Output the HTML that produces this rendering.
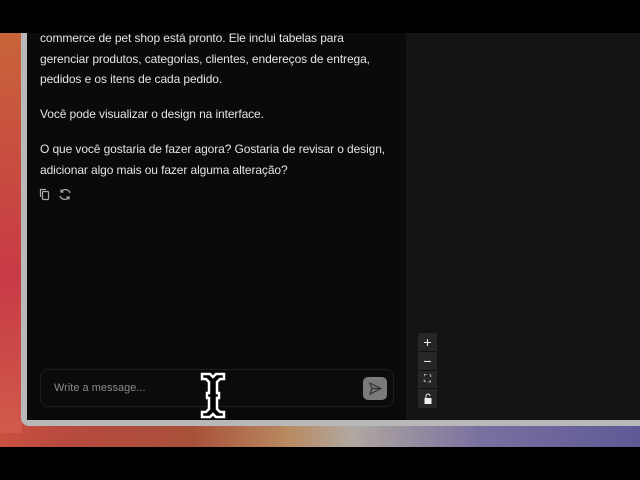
<!DOCTYPE html>
<html><head><style>
*{margin:0;padding:0;box-sizing:border-box}
body{width:640px;height:480px;background:#000;position:relative;overflow:hidden;font-family:"Liberation Sans",sans-serif}
.bg{position:absolute;left:0;top:33px;width:640px;height:414px;background:linear-gradient(90deg,#c8503f 0%,#b84a3f 10%,#a8503a 30%,#b88a60 45%,#b0a8a0 55%,#7a70a0 75%,#5e5a96 100%)}
.bgl{position:absolute;left:0;top:33px;width:22px;height:400px;background:linear-gradient(180deg,#c8643a,#c83a45 60%,#d05a4a)}
.win{position:absolute;left:21px;top:20px;width:640px;height:406px;background:#b8b8b8;border-radius:8px}
.left{position:absolute;left:27px;top:20px;width:379px;height:400px;background:#0a0a0a}
.right{position:absolute;left:406px;top:20px;width:240px;height:400px;background:#141414}
.top{position:absolute;left:0;top:0;width:640px;height:33px;background:#000}
.bot{position:absolute;left:0;top:447px;width:640px;height:33px;background:#000}
.t{position:absolute;left:40px;color:#e4e4e4;font-size:12px;letter-spacing:-0.1px;white-space:nowrap}
.inp{position:absolute;left:40px;top:369px;width:354px;height:38px;border:1px solid #1e1e1e;border-radius:8px;background:#0b0b0b}
.ph{position:absolute;left:13px;top:12px;font-size:11px;color:#8a8a8a}
.send{position:absolute;left:322px;top:7px;width:24px;height:23px;background:#7a7a7a;border-radius:5px}
.ctl{position:absolute;left:418px;top:333px;width:19px;height:75px;background:#262626;border-radius:2px}
.ctl div{height:18.75px;border-bottom:1px solid #111;color:#eee;text-align:center;font-size:14px;line-height:18px}
</style></head><body>
<div class="bg"></div><div class="bgl"></div>
<div class="win"></div>
<div class="left"></div><div class="right"></div>
<div class="top"></div><div class="bot"></div>
<div class="t" style="top:31px">commerce de pet shop está pronto. Ele inclui tabelas para</div>
<div class="t" style="top:52px">gerenciar produtos, categorias, clientes, endereços de entrega,</div>
<div class="t" style="top:72px">pedidos e os itens de cada pedido.</div>
<div class="t" style="top:107px">Você pode visualizar o design na interface.</div>
<div class="t" style="top:142px">O que você gostaria de fazer agora? Gostaria de revisar o design,</div>
<div class="t" style="top:163px">adicionar algo mais ou fazer alguma alteração?</div>
<svg style="position:absolute;left:39px;top:188px" width="34" height="13" fill="none" stroke="#aaa" stroke-width="1.2">
<rect x="3.5" y="3.5" width="6" height="8" rx="1"/><path d="M1.5 9V1.5H7"/>
<path d="M31 5A5 5 0 0 0 22 4M21 8a5 5 0 0 0 9 1M22 1.5v2.5h2.5M30 11.5V9h-2.5"/>
</svg>
<div class="inp"><div class="ph">Write a message...</div>
<div class="send"><svg width="24" height="23" fill="none" stroke="#333" stroke-width="1.2"><path d="M7 6l11 5.5L7 17l2-5.5z M9 11.5h9"/></svg></div></div>
<div class="ctl"><div>+</div><div>−</div><div style="font-size:10px">⛶</div><div style="border:none"><svg width="10" height="12" style="margin-top:4px"><rect x="1.5" y="5" width="7" height="6" fill="#eee"/><path d="M3 5V3a2 2 0 0 1 4 0" stroke="#eee" fill="none"/></svg></div></div>
<svg style="position:absolute;left:200px;top:372px" width="26" height="48"><path d="M2 2h8l3 3 3-3h8v5h-4l-3 3v11h2v5h-2v11l3 3h4v5h-8l-3-3-3 3H2v-5h4l3-3V26H7v-5h2V10L6 7H2z" fill="#000" stroke="#fff" stroke-width="2.5"/></svg>
</body></html>
